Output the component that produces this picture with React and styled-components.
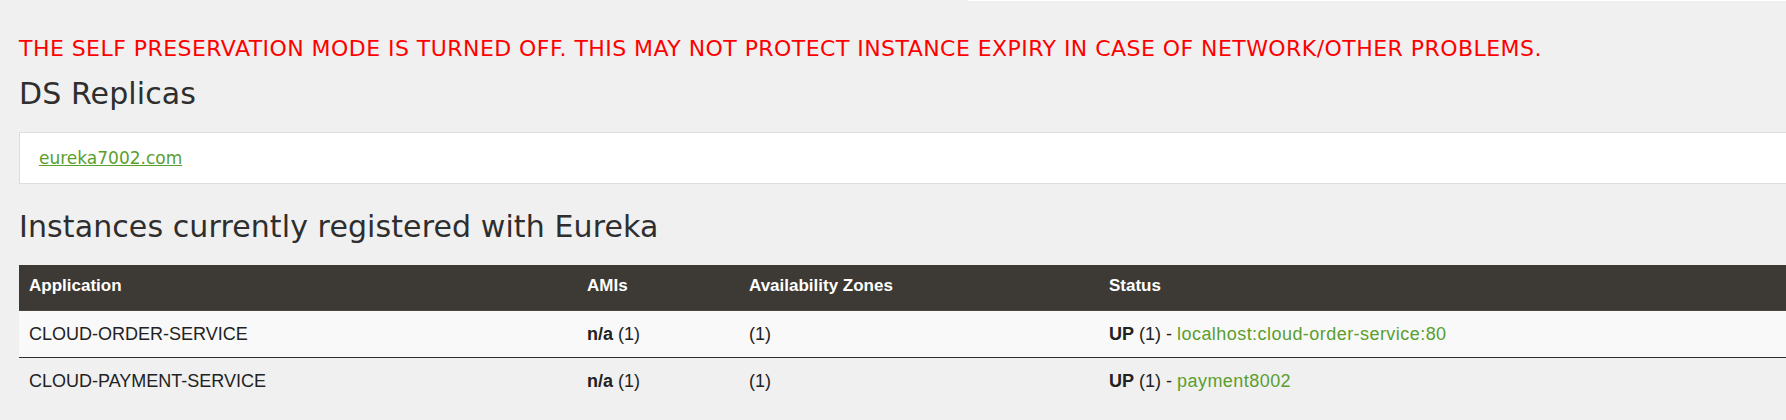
import React from "react";
import styled, { createGlobalStyle } from "styled-components";

const GlobalStyle = createGlobalStyle`
  html, body {
    margin: 0;
    padding: 0;
    background: #f0f0f0;
    overflow: hidden;
  }
  body {
    font-family: "DejaVu Sans", "Liberation Sans", sans-serif;
    color: #333;
  }
`;

const instances = [
  { name: "CLOUD-ORDER-SERVICE", ami: "n/a", amiCount: 1, zones: 1, status: "UP", count: 1, link: "localhost:cloud-order-service:80" },
  { name: "CLOUD-PAYMENT-SERVICE", ami: "n/a", amiCount: 1, zones: 1, status: "UP", count: 1, link: "payment8002" },
];

function App() {
  return (
    <>
      <GlobalStyle />
      <TopStrip />
      <Page>
        <Warning>
          THE SELF PRESERVATION MODE IS TURNED OFF. THIS MAY NOT PROTECT INSTANCE EXPIRY IN CASE OF NETWORK/OTHER PROBLEMS.
        </Warning>
        <Heading>DS Replicas</Heading>
        <Panel>
          <ReplicaLink href="#">eureka7002.com</ReplicaLink>
        </Panel>
        <Heading $gap={26}>Instances currently registered with Eureka</Heading>
        <Table>
          <HeadRow>
            <HeadCell>Application</HeadCell>
            <HeadCell>AMIs</HeadCell>
            <HeadCell>Availability Zones</HeadCell>
            <HeadCell>Status</HeadCell>
          </HeadRow>
          {instances.map((item, i) => (
            <Row key={item.name} $odd={i % 2 === 0}>
              <Cell>{item.name}</Cell>
              <Cell>
                <b>{item.ami}</b> ({item.amiCount})
              </Cell>
              <Cell>({item.zones})</Cell>
              <Cell>
                <b>{item.status}</b> ({item.count}) - <StatusLink href="#">{item.link}</StatusLink>
              </Cell>
            </Row>
          ))}
        </Table>
      </Page>
    </>
  );
}

export default App;

const TopStrip = styled.div`
  height: 1px;
  margin-left: 968px;
  background: #fff;
`;

const Page = styled.div`
  width: 1820px;
  padding-left: 19px;
`;

const Warning = styled.h4`
  margin: 35px 0 0;
  font-size: 22px;
  line-height: 26px;
  font-weight: normal;
  color: #ff0000;
  letter-spacing: 0.45px;
`;

const Heading = styled.h2`
  margin: ${(p) => p.$gap || 15}px 0 0;
  font-size: 30px;
  line-height: 34px;
  font-weight: normal;
  color: #2e2e2e;
  letter-spacing: 0.1px;
`;

const Panel = styled.div`
  margin-top: 21px;
  background: #fff;
  border: 1px solid #dedede;
  padding: 15px 19px;
`;

const ReplicaLink = styled.a`
  display: block;
  font-size: 17px;
  line-height: 20px;
  color: #5a9e2e;
  text-decoration: underline;
`;

const Table = styled.div`
  margin-top: 21px;
  font-family: "Liberation Sans", Arial, sans-serif;
  font-size: 17px;
`;

const columns = "558px 162px 360px 1fr";

const HeadRow = styled.div`
  display: grid;
  grid-template-columns: ${columns};
  background: #3d3934;
  border-bottom: 1px solid #4a4641;
`;

const HeadCell = styled.div`
  padding: 11px 10px 14px;
  line-height: 20px;
  font-weight: bold;
  color: #fff;
`;

const Row = styled.div`
  display: grid;
  grid-template-columns: ${columns};
  background: ${(p) => (p.$odd ? "#f9f9f9" : "#f0f0f0")};
  border-bottom: ${(p) => (p.$odd ? "1px solid #2e2e2e" : "none")};
`;

const Cell = styled.div`
  padding: 13px 10px;
  line-height: 20px;
  font-size: 18px;
  color: #222;

  b {
    font-weight: bold;
  }
`;

const StatusLink = styled.a`
  color: #5a9e2e;
  text-decoration: none;
  letter-spacing: 0.45px;
`;
